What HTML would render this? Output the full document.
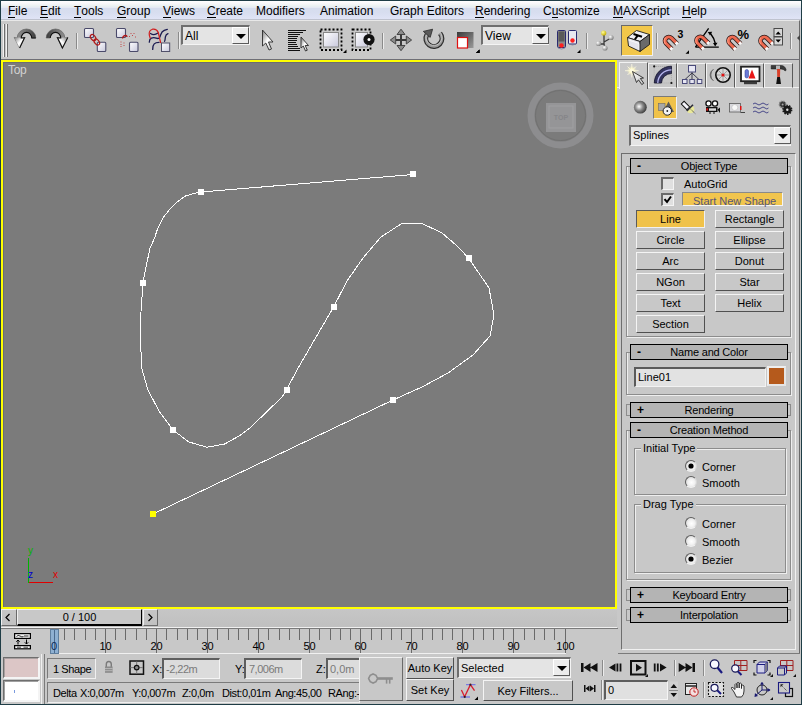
<!DOCTYPE html>
<html><head><meta charset="utf-8">
<style>
*{margin:0;padding:0;box-sizing:border-box}
html,body{width:802px;height:705px;overflow:hidden;background:#c8c8c8;font-family:"Liberation Sans",sans-serif;font-size:11px;color:#000;position:relative}
.a{position:absolute}
.t{position:absolute;white-space:nowrap;line-height:13px}
svg{position:absolute;overflow:visible}
#menu{position:absolute;left:1px;top:1px;width:800px;height:19px;background:linear-gradient(#ffffff 0px,#f6f5f8 3px,#eaf2f2 5px,#e6e9f4 6.5px,#d6ddee 7.5px,#d8def0 12px,#e0e4f6 18px);border-bottom:1px solid #bfc3cf}
#menu span{position:absolute;top:3px;font-size:12px;line-height:14px;color:#000}
#menu u{text-decoration:none;position:relative}
#menu u:after{content:"";position:absolute;left:0;right:0;top:13px;height:1px;background:#000}
.vsep{position:absolute;width:2px;border-left:1px solid #8a8a8a;border-right:1px solid #ececec}
.drop{position:absolute;background:#e4e4e4;border-top:2px solid #6e6e6e;border-left:2px solid #6e6e6e;border-bottom:1px solid #f4f4f4;border-right:1px solid #f4f4f4}
.dbtn{position:absolute;background:#ececec;border-right:1px solid #5a5a5a;border-bottom:1px solid #5a5a5a;border-top:1px solid #fff;border-left:1px solid #fff}
.dbtn:after{content:"";position:absolute;left:50%;top:50%;margin-left:-5px;margin-top:-2px;border-left:5px solid transparent;border-right:5px solid transparent;border-top:5px solid #000}
.btn{position:absolute;background:#c8c8c8;border-top:1px solid #f4f4f4;border-left:1px solid #f4f4f4;border-right:1px solid #505050;border-bottom:1px solid #505050;text-align:center;line-height:16px;height:18px}
.roll{position:absolute;left:630px;width:158px;height:16px;background:#b4b4b4;border:1px solid #000;text-align:center;line-height:14px;letter-spacing:-0.2px}
.roll b{position:absolute;left:6px;top:0px;font-weight:bold;font-size:12px}
.grp{position:absolute;border:1px solid #8c8c8c;box-shadow:1px 1px 0 #ededed, inset 1px 1px 0 #ededed}
.radio{position:absolute;width:12px;height:12px;border-radius:50%;background:radial-gradient(circle at 55% 55%,#ffffff 0,#f2f2f2 40%,#dcdcdc 75%);border:1.5px solid;border-color:#5e5e5e #d8d8d8 #f0f0f0 #5e5e5e;left:0}
.radio.on:after{content:"";position:absolute;left:2.5px;top:2.5px;width:4px;height:4px;border-radius:50%;background:#000;box-shadow:0 0 0 0.6px #000}
.fld{position:absolute;background:#dcdcdc;border-top:2px solid #5e5e5e;border-left:2px solid #5e5e5e;border-right:1px solid #f4f4f4;border-bottom:1px solid #f4f4f4}
</style></head>
<body>
<div class="a" style="left:0;top:0;width:802px;height:705px;border:1px solid #1f3d46;z-index:50;pointer-events:none"></div>
<div id="menu">
<span style="left:7px"><u>F</u>ile</span>
<span style="left:39px"><u>E</u>dit</span>
<span style="left:73px"><u>T</u>ools</span>
<span style="left:116px"><u>G</u>roup</span>
<span style="left:162px"><u>V</u>iews</span>
<span style="left:206px"><u>C</u>reate</span>
<span style="left:255px">Modifiers</span>
<span style="left:319px">Animation</span>
<span style="left:389px">Graph Editors</span>
<span style="left:474px"><u>R</u>endering</span>
<span style="left:542px">C<u>u</u>stomize</span>
<span style="left:612px"><u>M</u>AXScript</span>
<span style="left:681px"><u>H</u>elp</span>
</div>
<div class="a" style="left:1px;top:20px;width:799px;height:40px;background:#c8c8c8;border-top:1px solid #e8e8e8;border-bottom:1px solid #6f6f76;border-right:1px solid #6a6a6a"></div>
<!-- grip -->
<div class="a" style="left:3px;top:24px;width:2px;height:33px;border-left:1px solid #f2f2f2;border-right:1px solid #6e6e6e"></div>
<div class="a" style="left:6px;top:24px;width:2px;height:33px;border-left:1px solid #f2f2f2;border-right:1px solid #6e6e6e"></div>
<!-- separators -->
<div class="vsep" style="left:76px;top:33px;height:16px"></div>
<div class="vsep" style="left:178px;top:32px;height:17px"></div>
<div class="vsep" style="left:382px;top:33px;height:16px"></div>
<div class="vsep" style="left:586px;top:33px;height:16px"></div>
<div class="vsep" style="left:656px;top:33px;height:16px"></div>
<div class="vsep" style="left:790px;top:33px;height:16px"></div>
<!-- dropdowns -->
<div class="drop" style="left:181px;top:25px;width:69px;height:20px"></div>
<div class="t" style="left:185px;top:29px;font-size:12px;line-height:14px">All</div>
<div class="dbtn" style="left:232px;top:27px;width:17px;height:17px"></div>
<div class="drop" style="left:481px;top:25px;width:68px;height:20px"></div>
<div class="t" style="left:485px;top:29px;font-size:12px;line-height:14px">View</div>
<div class="dbtn" style="left:532px;top:27px;width:17px;height:17px"></div>
<!-- yellow toggle -->
<div class="a" style="left:621px;top:25px;width:32px;height:31px;background:#f2c74a;border-top:1px solid #6a6a6a;border-left:1px solid #6a6a6a;border-right:1px solid #f0f0f0;border-bottom:1px solid #f0f0f0"></div>

<svg style="left:0;top:0" width="802" height="60">
<defs>
<linearGradient id="gArc" x1="0" y1="0" x2="1" y2="0"><stop offset="0" stop-color="#9a9a9a"/><stop offset="0.6" stop-color="#6a6a6a"/><stop offset="1" stop-color="#3a3a3a"/></linearGradient>
<linearGradient id="gArcR" x1="1" y1="0" x2="0" y2="0"><stop offset="0" stop-color="#9a9a9a"/><stop offset="0.6" stop-color="#6a6a6a"/><stop offset="1" stop-color="#3a3a3a"/></linearGradient>
<linearGradient id="gHead" x1="0" y1="0" x2="1" y2="1"><stop offset="0" stop-color="#7a7a7a"/><stop offset="0.5" stop-color="#ffffff"/><stop offset="1" stop-color="#bcbcbc"/></linearGradient>
<linearGradient id="gBox" x1="0" y1="0" x2="1" y2="1"><stop offset="0" stop-color="#ffffff"/><stop offset="1" stop-color="#c8c8dc"/></linearGradient>
<linearGradient id="gMag" x1="0" y1="0" x2="1" y2="1"><stop offset="0" stop-color="#ff9a80"/><stop offset="1" stop-color="#d84a2a"/></linearGradient>
<linearGradient id="gScale" x1="0" y1="0" x2="1" y2="1"><stop offset="0" stop-color="#3a3a3a"/><stop offset="1" stop-color="#9a9a9a"/></linearGradient>
<radialGradient id="gBall" cx="0.35" cy="0.35" r="0.7"><stop offset="0" stop-color="#ffffff"/><stop offset="1" stop-color="#7a7a7a"/></radialGradient>
<radialGradient id="gBallY" cx="0.35" cy="0.35" r="0.7"><stop offset="0" stop-color="#ffffa0"/><stop offset="1" stop-color="#c8b000"/></radialGradient>
</defs>
<!-- undo -->
<g id="undo">
<path d="M35.8 38 A9.3 9 0 0 0 17.2 38 L14.2 37.4 L19.6 48 L24.6 37.6 L21.2 38 A5.3 5.6 0 0 1 31.8 38 Z" fill="url(#gArc)" stroke="#555" stroke-width="0.6"/>
<path d="M14.2 37.4 L19.6 48 L24.6 37.6 Z" fill="url(#gHead)"/>
<path d="M19.6 48 L24.6 37.6 L21.2 38 A5.3 5.6 0 0 1 31.8 38 L35.8 38" fill="none" stroke="#111" stroke-width="1.1"/>
</g>
<!-- redo -->
<g transform="translate(82 0) scale(-1 1)">
<path d="M35.8 38 A9.3 9 0 0 0 17.2 38 L14.2 37.4 L19.6 48 L24.6 37.6 L21.2 38 A5.3 5.6 0 0 1 31.8 38 Z" fill="url(#gArc)" stroke="#555" stroke-width="0.6"/>
<path d="M14.2 37.4 L19.6 48 L24.6 37.6 Z" fill="url(#gHead)"/>
<path d="M14.2 37.4 L19.6 48 L24.6 37.6 L21.2 38 A5.3 5.6 0 0 1 31.8 38" fill="none" stroke="#111" stroke-width="1.1"/>
</g>
<!-- link -->
<rect x="84.5" y="28.5" width="9" height="9" rx="1" fill="url(#gBox)" stroke="#4a4a6a" stroke-width="1.1"/>
<rect x="97.3" y="42.3" width="8.5" height="9.2" rx="1" fill="url(#gBox)" stroke="#4a4a6a" stroke-width="1.1"/>
<ellipse cx="93.1" cy="37.6" rx="2.2" ry="3.4" transform="rotate(-40 93.1 37.6)" fill="none" stroke="#b01818" stroke-width="1.2"/>
<ellipse cx="96.8" cy="42" rx="2.2" ry="3.4" transform="rotate(-40 96.8 42)" fill="none" stroke="#b01818" stroke-width="1.2"/>
<!-- unlink -->
<rect x="116.5" y="28.5" width="9" height="9" rx="1" fill="url(#gBox)" stroke="#4a4a6a" stroke-width="1.1"/>
<rect x="129.5" y="42.3" width="8.5" height="9.2" rx="1" fill="url(#gBox)" stroke="#4a4a6a" stroke-width="1.1"/>
<path d="M122.5 38.5 q0.5 -3 3 -3 q1.5 0 1.5 1.5" fill="none" stroke="#b01818" stroke-width="1.3"/>
<path d="M130.5 33.5 h1 M133.5 33.5 h1 M129 36.5 h1 M132 35.5 h1 M135 37 h1 M120.5 42 h1 M120.5 44.5 h1 M120.5 46.5 h1 M123.5 43 h1 M123.5 45.5 h1" stroke="#c04a4a" stroke-width="1"/>
<!-- bind -->
<g fill="none" stroke="#1a1a50" stroke-width="1.3" stroke-linecap="round">
<path d="M150.5 33.5 q3.5 2.5 7.5 -0.5"/>
<path d="M149.3 42.2 q0 -3 2 -4 q2.5 -1 5 0 q2.5 1 3.5 -1 q1 -3 2.5 -5.5 q1.5 -1.5 5 -2.3"/>
<path d="M152.7 49.4 q0 -4 1.5 -5.5 q1.5 -1.5 4.8 -1.5"/>
<path d="M164.6 41.3 q0.5 -1 0.8 -4.5 q0.5 -2.5 2.6 -3.2"/>
</g>
<path d="M160.7 43 L158.3 32.5 Q156.5 28.5 152.5 29.2 Q148.5 30.5 149.3 35 L150.3 38.5" fill="none" stroke="#d02020" stroke-width="1.2"/>
<rect x="161.5" y="43" width="8.2" height="8.5" fill="url(#gBox)" stroke="#50506a" stroke-width="1"/>
<!-- select arrow -->
<path d="M262.5 30 L262.5 46 L265.8 43 L269 50 L271.5 49 L268.5 42 L273 42 Z" fill="url(#gHead)" stroke="#2a2a2a" stroke-width="0.9"/>
<!-- select by name -->
<path d="M288 30.5 H306 M288 32.5 H303 M288 34.5 H300 M288 36.5 H298 M288 38.5 H297 M288 40.5 H297 M288 42.5 H296 M288 44.5 H297 M288 46.5 H298 M288 48.5 H300 M288 50.5 H300" stroke="#111" stroke-width="1"/>
<path d="M301 37 L301 48 L303.3 46 L305.5 51 L307.3 50.2 L305.2 45.5 L308.5 45.5 Z" fill="url(#gHead)" stroke="#2a2a2a" stroke-width="0.9"/>
<!-- rect select -->
<rect x="323.5" y="32.5" width="15" height="14.5" fill="url(#gBox)" stroke="#888" stroke-width="1"/>
<rect x="320.5" y="29.5" width="21" height="20.5" fill="none" stroke="#000" stroke-width="1.8" stroke-dasharray="2 2"/>
<path d="M343 53 L346.5 49.5 V53 Z" fill="#000"/>
<!-- window crossing -->
<rect x="355.5" y="32.5" width="12" height="14.5" fill="url(#gBox)" stroke="#888" stroke-width="1"/>
<rect x="352.5" y="29.5" width="18" height="20.5" fill="none" stroke="#000" stroke-width="1.8" stroke-dasharray="2 2"/>
<circle cx="369" cy="39.5" r="5.6" fill="#111"/>
<circle cx="369" cy="39.5" r="1.5" fill="#fff"/>
<!-- move -->
<path d="M395.7 40 H406.5 M401 34.5 V45.5" stroke="#3a3a3a" stroke-width="2"/>
<g fill="#8c8c8c" stroke="#3a3a3a" stroke-width="0.9" stroke-linejoin="round">
<path d="M401 29.2 L405 34.5 H397 Z"/>
<path d="M401 50.7 L405 45.5 H397 Z"/>
<path d="M390.3 40 L395.7 36 V44 Z"/>
<path d="M411.6 40 L406.3 36 V44 Z"/>
</g>
<!-- rotate -->
<path d="M440 33.3 A8 8 0 1 1 427 34.5" fill="none" stroke="#2e2e2e" stroke-width="5"/>
<path d="M440 33.3 A8 8 0 1 1 427 34.5" fill="none" stroke="#9a9a9a" stroke-width="2.6"/>
<path d="M440.5 32.8 A8 8 0 1 1 426.6 34.2" fill="none" stroke="#d0d0d0" stroke-width="0.8"/>
<path d="M423.3 31.4 L432.6 29.2 L430.2 37.4 Z" fill="#5a5a5a" stroke="#2a2a2a" stroke-width="0.8"/>
<!-- scale -->
<rect x="457" y="32" width="16.5" height="16" fill="url(#gScale)"/>
<rect x="457.5" y="37.5" width="10" height="10.5" fill="#fff" stroke="#e01010" stroke-width="1.2"/>
<path d="M476 53 L479.5 49.5 V53 Z" fill="#000"/>
<path d="M476 53 L479.5 49.5 V53 Z" transform="translate(0 0)" fill="#000"/>
<!-- flyout near View -->
<path d="M476 53 L479.5 49.5 V53 Z" fill="#000"/>
<!-- pivot -->
<rect x="557.5" y="30.5" width="8" height="17" rx="1" fill="#8a8a8a" stroke="#2a2a70" stroke-width="1"/>
<rect x="558.5" y="31.5" width="6" height="10" fill="#5a5a5a"/>
<circle cx="561.5" cy="45.5" r="2.2" fill="#ff2020"/>
<rect x="568.5" y="30.5" width="8" height="13.5" rx="1" fill="#e8e8f0" stroke="#2a2a70" stroke-width="1"/>
<circle cx="572.5" cy="40.5" r="2.2" fill="#ff2020"/>
<path d="M558 48 q3.5 2 7 0 M569 44 q3.5 2 7 0" fill="none" stroke="#7a7a9a" stroke-width="0.8"/>
<path d="M577 53 L580.5 49.5 V53 Z" fill="#000"/>
<!-- manipulate -->
<path d="M604 34 L604 44 L599 44 M604 42 L611 38 M604 44 L605 48" fill="none" stroke="#3a3a3a" stroke-width="1.3"/>
<circle cx="603.7" cy="33" r="2.6" fill="url(#gBallY)"/>
<circle cx="598.5" cy="43.5" r="2.6" fill="url(#gBall)"/>
<circle cx="611" cy="37.5" r="2.6" fill="url(#gBall)"/>
<circle cx="605" cy="48" r="2.6" fill="url(#gBall)"/>
<!-- keyboard override icon -->
<path d="M627.5 37.5 L636.5 30.5 L649.5 34.5 L640 41.5 Z" fill="#f0f0f4" stroke="#1a1a1a" stroke-width="0.9"/>
<path d="M627.5 37.5 L640 41.5 V51.5 L628.5 46 Z" fill="#e4e4ec" stroke="#1a1a1a" stroke-width="0.9"/>
<path d="M640 41.5 L649.5 34.5 V44.5 L640 51.5 Z" fill="#6a6a6a" stroke="#1a1a1a" stroke-width="0.9"/>
<path d="M628.5 40 L639 43.5 V50" fill="none" stroke="#fff" stroke-width="0.7"/>
<path d="M633.5 34 L642 36.8" stroke="#000" stroke-width="2"/>
<path d="M637.8 35.4 L634.8 39.5" stroke="#000" stroke-width="2"/>
<!-- snaps: magnets -->
<g id="mag" transform="translate(668.8 40.8) rotate(-45)">
<path d="M-3.8 8 V0 A3.8 3.8 0 0 1 3.8 0 V8" fill="none" stroke="#2a1a1a" stroke-width="4.6"/>
<path d="M-3.8 8 V0 A3.8 3.8 0 0 1 3.8 0 V8" fill="none" stroke="#ee6a50" stroke-width="3"/>
<path d="M-4.6 0 A4.6 4.6 0 0 1 0 -4.6" fill="none" stroke="#ff9a80" stroke-width="1"/>
<rect x="-5.3" y="6" width="3" height="2.6" fill="#f8f8f8"/>
<rect x="2.3" y="6" width="3" height="2.6" fill="#f8f8f8"/>
</g>
<text x="677.6" y="37.6" font-family="Liberation Sans" font-weight="bold" font-size="10.5" fill="#000">3</text>
<path d="M685.5 53.8 L689 50.3 V53.8 Z" fill="#000"/>
<path d="M695.4 47.2 H718.8 M695.4 47.2 L708.6 28.3" stroke="#000" stroke-width="1.3" fill="none"/>
<path d="M710.5 33.5 q4 5 5 10.5" stroke="#000" stroke-width="1.4" fill="none"/>
<path d="M707.8 32 L712.2 31.8 L710 35.5 Z M713 43 L717.5 42.8 L715.2 46.5 Z" fill="#000"/>
<g transform="translate(31.5 -0.3)"><use href="#mag"/></g>
<g transform="translate(63.5 0)"><use href="#mag"/></g>
<text x="737.5" y="38.8" font-family="Liberation Sans" font-weight="bold" font-size="13" fill="#000">%</text>
<g transform="translate(95.5 0)"><use href="#mag"/></g>
<rect x="774" y="28.5" width="8.5" height="8" fill="#d8d8d8" stroke="#4a4a4a" stroke-width="1"/>
<rect x="774" y="37" width="8.5" height="8" fill="#d8d8d8" stroke="#4a4a4a" stroke-width="1"/>
<path d="M775.5 34.5 L778.2 31.5 L781 34.5 Z M775.5 39.5 L778.2 42.5 L781 39.5 Z" fill="#000"/>
<path d="M797 38 L800 35 V41 Z" fill="#444"/>
</svg>
<div class="a" style="left:1px;top:60px;width:616px;height:549px;background:#ffff00"></div>
<div class="a" style="left:3px;top:62px;width:612px;height:545px;background:#7b7b7b;border-top:1px solid #6b6b73;border-left:1px solid #6b6b73"></div>
<div class="t" style="left:8px;top:63px;font-size:12px;line-height:14px;color:#d2d2d2;letter-spacing:-0.3px">Top</div>
<!-- viewcube -->
<svg style="left:0;top:0" width="802" height="705">
<circle cx="560.5" cy="115.5" r="29.5" fill="none" stroke="#8d8d8f" stroke-width="7"/>
<circle cx="560.5" cy="115.5" r="25" fill="none" stroke="#717171" stroke-width="1"/>
<rect x="546" y="103" width="30" height="29" fill="#959597"/>
<rect x="549" y="106" width="24" height="22" fill="none" stroke="#a0a0a2" stroke-width="1"/>
<text x="561" y="120" font-family="Liberation Sans" font-size="7" font-weight="bold" fill="#868689" text-anchor="middle">TOP</text>
</svg>
<!-- spline -->
<svg style="left:0;top:0" width="802" height="705">
<polyline shape-rendering="crispEdges" fill="none" stroke="#ffffff" stroke-width="1" points="153,514 393,400 422,387 448,373 473,355 490,336 494,315 489,288 468.6,258 456,245 442,233 421,223 401,224 381,237 363,258 347,281 333.6,307 297.5,369 286.5,390 282,397 251,427 240,435.5 224.6,444 207,447.2 189,442 173,430 159,411 148,390 142,369 140.5,343 140.5,319 143,283 145,272 150,248 154.4,238.5 157.5,229 163.6,217 170.5,208.4 175.8,203 185.4,196 195.8,193 201,192 413,174.5"/>
<g fill="#ffffff">
<rect x="198" y="189" width="6" height="6"/>
<rect x="410" y="171" width="6" height="6"/>
<rect x="140" y="280" width="6" height="6"/>
<rect x="331" y="304" width="6" height="6"/>
<rect x="466" y="255" width="6" height="6"/>
<rect x="390" y="397" width="6" height="6"/>
<rect x="284" y="387" width="6" height="6"/>
<rect x="170" y="427" width="6" height="6"/>
</g>
<rect x="150" y="511" width="6" height="6" fill="#ffff00"/>
<!-- axis -->
<line x1="28.5" y1="558" x2="28.5" y2="583" stroke="#00b400" stroke-width="1"/>
<line x1="29" y1="582.5" x2="53" y2="582.5" stroke="#e00000" stroke-width="1"/>
<text x="28" y="554" font-family="Liberation Sans" font-size="10" fill="#00b400">y</text>
<text x="28" y="578" font-family="Liberation Sans" font-size="10" fill="#0000d0">z</text>
<text x="53" y="578" font-family="Liberation Sans" font-size="10" fill="#e00000">x</text>
</svg>
<!-- tabs -->
<div class="a" style="left:617px;top:87px;width:182px;height:1px;background:#efefef"></div>
<div class="a" style="left:619px;top:62px;width:29px;height:27px;background:#c8c8c8;border-left:1px solid #f2f2f2;border-top:1px solid #f2f2f2;border-right:1px solid #5a5a5a"></div>
<div class="a" style="left:648px;top:63px;width:29px;height:25px;border-left:1px solid #f2f2f2;border-top:1px solid #f2f2f2;border-right:1px solid #5a5a5a;border-bottom:1px solid #efefef"></div>
<div class="a" style="left:677px;top:63px;width:29px;height:25px;border-left:1px solid #f2f2f2;border-top:1px solid #f2f2f2;border-right:1px solid #5a5a5a;border-bottom:1px solid #efefef"></div>
<div class="a" style="left:706px;top:63px;width:29px;height:25px;border-left:1px solid #f2f2f2;border-top:1px solid #f2f2f2;border-right:1px solid #5a5a5a;border-bottom:1px solid #efefef"></div>
<div class="a" style="left:735px;top:63px;width:29px;height:25px;border-left:1px solid #f2f2f2;border-top:1px solid #f2f2f2;border-right:1px solid #5a5a5a;border-bottom:1px solid #efefef"></div>
<div class="a" style="left:764px;top:63px;width:29px;height:25px;border-left:1px solid #f2f2f2;border-top:1px solid #f2f2f2;border-right:1px solid #5a5a5a;border-bottom:1px solid #efefef"></div>
<div class="a" style="left:799px;top:60px;width:1px;height:594px;background:#6a6a6a"></div>

<!-- sub-category yellow button -->
<div class="a" style="left:653px;top:96px;width:24px;height:23px;background:#f0c24a;border-top:1px solid #7a7a7a;border-left:1px solid #7a7a7a;border-right:1px solid #f2f2f2;border-bottom:1px solid #f2f2f2"></div>

<!-- splines dropdown -->
<div class="drop" style="left:629px;top:125px;width:162px;height:21px"></div>
<div class="t" style="left:633px;top:129px">Splines</div>
<div class="dbtn" style="left:774px;top:127px;width:17px;height:17px"></div>

<!-- container -->
<div class="a" style="left:621px;top:153px;width:175px;height:497px;border-top:1px solid #6e6e6e;border-left:1px solid #6e6e6e;border-right:1px solid #f0f0f0;border-bottom:1px solid #f0f0f0"></div>

<!-- Object Type -->
<div class="a" style="left:626px;top:166px;width:165px;height:171px;border:1px solid #8c8c8c;border-top:none;box-shadow:inset 1px 0 0 #eeeeee,1px 1px 0 #eeeeee"></div>
<div class="roll" style="top:158px">Object Type<b>-</b></div>
<div class="a" style="left:661px;top:177px;width:13px;height:13px;background:#e0e0e0;border-top:2px solid #6a6a6a;border-left:2px solid #6a6a6a;border-right:1px solid #f4f4f4;border-bottom:1px solid #f4f4f4"></div>
<div class="t" style="left:684px;top:178px">AutoGrid</div>
<div class="a" style="left:661px;top:193px;width:13px;height:13px;background:#e0e0e0;border-top:2px solid #6a6a6a;border-left:2px solid #6a6a6a;border-right:1px solid #f4f4f4;border-bottom:1px solid #f4f4f4"></div>
<svg style="left:661px;top:193px" width="13" height="13"><path d="M3.5 6.2 L6 9 L10 3.5" fill="none" stroke="#000" stroke-width="2"/></svg>
<div class="a" style="left:682px;top:192px;width:101px;height:14px;background:#f1c54e;border-top:1px solid #8a8a8a;border-left:1px solid #8a8a8a;border-right:1px solid #f4f4f4;border-bottom:1px solid #f4f4f4"></div>
<div class="t" style="left:693px;top:195px;color:#55557a">Start New Shape</div>

<div class="a" style="left:636px;top:210px;width:69px;height:18px;background:#f0c24a;border-top:1px solid #5a5a5a;border-left:1px solid #5a5a5a;border-right:1px solid #f0f0f0;border-bottom:1px solid #f0f0f0;text-align:center;line-height:16px;padding-top:0px">Line</div>
<div class="btn" style="left:715px;top:210px;width:69px;height:18px">Rectangle</div>
<div class="btn" style="left:636px;top:231px;width:69px;height:18px">Circle</div>
<div class="btn" style="left:715px;top:231px;width:69px;height:18px">Ellipse</div>
<div class="btn" style="left:636px;top:252px;width:69px;height:18px">Arc</div>
<div class="btn" style="left:715px;top:252px;width:69px;height:18px">Donut</div>
<div class="btn" style="left:636px;top:273px;width:69px;height:18px">NGon</div>
<div class="btn" style="left:715px;top:273px;width:69px;height:18px">Star</div>
<div class="btn" style="left:636px;top:294px;width:69px;height:18px">Text</div>
<div class="btn" style="left:715px;top:294px;width:69px;height:18px">Helix</div>
<div class="btn" style="left:636px;top:315px;width:69px;height:18px">Section</div>

<!-- Name and Color -->
<div class="a" style="left:626px;top:352px;width:165px;height:43px;border:1px solid #8c8c8c;border-top:none;box-shadow:inset 1px 0 0 #eeeeee,1px 1px 0 #eeeeee"></div>
<div class="roll" style="top:344px">Name and Color<b>-</b></div>
<div class="a" style="left:634px;top:367px;width:132px;height:20px;background:#e2e2e2;border-top:2px solid #5a5a5a;border-left:2px solid #5a5a5a;border-right:1px solid #f2f2f2;border-bottom:1px solid #f2f2f2"></div>
<div class="t" style="left:638px;top:371px">Line01</div>
<div class="a" style="left:767px;top:366px;width:19px;height:20px;background:#b55a1c;border:2px solid #e4e4e4;border-top-color:#eeeeee;border-left-color:#eeeeee"></div>

<!-- Rendering -->
<div class="a" style="left:626px;top:404px;width:4px;height:12px;border:1px solid #8c8c8c;border-right:none"></div>
<div class="a" style="left:787px;top:404px;width:4px;height:12px;border:1px solid #8c8c8c;border-left:none"></div>
<div class="roll" style="top:402px">Rendering<b>+</b></div>

<!-- Creation Method -->
<div class="a" style="left:626px;top:430px;width:165px;height:150px;border:1px solid #8c8c8c;border-top:none;box-shadow:inset 1px 0 0 #eeeeee,1px 1px 0 #eeeeee"></div>
<div class="roll" style="top:422px">Creation Method<b>-</b></div>
<div class="a" style="left:634px;top:448px;width:152px;height:47px;border:1px solid #8c8c8c;box-shadow:inset 1px 1px 0 #eeeeee,1px 1px 0 #eeeeee"></div>
<div class="t" style="left:641px;top:442px;background:#c8c8c8;padding:0 2px">Initial Type</div>
<div class="radio on" style="left:685px;top:460px"></div>
<div class="t" style="left:702px;top:461px">Corner</div>
<div class="radio" style="left:685px;top:476px"></div>
<div class="t" style="left:702px;top:477px">Smooth</div>
<div class="a" style="left:634px;top:504px;width:152px;height:69px;border:1px solid #8c8c8c;box-shadow:inset 1px 1px 0 #eeeeee,1px 1px 0 #eeeeee"></div>
<div class="t" style="left:641px;top:498px;background:#c8c8c8;padding:0 2px">Drag Type</div>
<div class="radio" style="left:685px;top:517px"></div>
<div class="t" style="left:702px;top:518px">Corner</div>
<div class="radio" style="left:685px;top:535px"></div>
<div class="t" style="left:702px;top:536px">Smooth</div>
<div class="radio on" style="left:685px;top:553px"></div>
<div class="t" style="left:702px;top:554px">Bezier</div>

<div class="a" style="left:626px;top:166px;width:4px;height:1px;background:#8c8c8c"></div><div class="a" style="left:788px;top:166px;width:3px;height:1px;background:#8c8c8c"></div>
<div class="a" style="left:626px;top:352px;width:4px;height:1px;background:#8c8c8c"></div><div class="a" style="left:788px;top:352px;width:3px;height:1px;background:#8c8c8c"></div>
<div class="a" style="left:626px;top:430px;width:4px;height:1px;background:#8c8c8c"></div><div class="a" style="left:788px;top:430px;width:3px;height:1px;background:#8c8c8c"></div>
<!-- Keyboard Entry / Interpolation -->
<div class="a" style="left:626px;top:589px;width:4px;height:12px;border:1px solid #8c8c8c;border-right:none"></div>
<div class="a" style="left:787px;top:589px;width:4px;height:12px;border:1px solid #8c8c8c;border-left:none"></div>
<div class="roll" style="top:587px">Keyboard Entry<b>+</b></div>
<div class="a" style="left:626px;top:609px;width:4px;height:12px;border:1px solid #8c8c8c;border-right:none"></div>
<div class="a" style="left:787px;top:609px;width:4px;height:12px;border:1px solid #8c8c8c;border-left:none"></div>
<div class="roll" style="top:607px">Interpolation<b>+</b></div>
<svg style="left:0;top:0" width="802" height="130">
<defs>
<radialGradient id="gGlow" cx="0.5" cy="0.5" r="0.5"><stop offset="0" stop-color="#ffffff"/><stop offset="0.35" stop-color="#fff8c0"/><stop offset="1" stop-color="#c8c8c8" stop-opacity="0"/></radialGradient>
<radialGradient id="gSph" cx="0.4" cy="0.45" r="0.6"><stop offset="0" stop-color="#ffffff"/><stop offset="0.5" stop-color="#8a8a8a"/><stop offset="1" stop-color="#3a3a3a"/></radialGradient>
<linearGradient id="gTube" x1="0" y1="1" x2="1" y2="0"><stop offset="0" stop-color="#2a2a50"/><stop offset="0.5" stop-color="#8a8ac0"/><stop offset="1" stop-color="#2a2a50"/></linearGradient>
<linearGradient id="gArw" x1="0" y1="0" x2="1" y2="1"><stop offset="0" stop-color="#ffffff"/><stop offset="1" stop-color="#c0c0c0"/></linearGradient>
</defs>
<!-- tab1 create -->
<circle cx="631.8" cy="70.7" r="6" fill="url(#gGlow)"/>
<path d="M631.8 64 V77.4 M625 70.7 H638.6 M627.5 66.5 L636 75 M636 66.5 L627.5 75" stroke="#fffbe0" stroke-width="0.8"/>
<path d="M632.5 71.5 L636.5 82.5 L638.5 79.8 L641.8 84.6 L643.8 83.2 L640.3 78.5 L643.5 78 Z" fill="url(#gArw)" stroke="#2a2a2a" stroke-width="0.9"/>
<!-- tab2 modify -->
<path d="M654.2 66.4 H671.4 V83" fill="none" stroke="#8a8a8a" stroke-width="0.6" stroke-dasharray="1 1"/>
<path d="M654.2 66.4 V83 H671.4" fill="none" stroke="#a0a0a0" stroke-width="0.6" stroke-dasharray="1 1"/>
<path d="M654.3 83 A17.2 16.8 0 0 1 671.5 66.2 V73.5 A10 9.5 0 0 0 661.5 83 Z" fill="#34345e" stroke="#14142a" stroke-width="0.8"/>
<path d="M657.8 83 A13.7 13.2 0 0 1 671.5 69.8" fill="none" stroke="#b8b8f0" stroke-width="1.3"/>
<circle cx="654.2" cy="66.4" r="1.1" fill="#111"/>
<circle cx="671.4" cy="83" r="1.1" fill="#111"/>
<!-- tab3 hierarchy -->
<path d="M692 72 V80 M692 73 L684.5 80 M692 73 L699.5 80" stroke="#3a3a4a" stroke-width="1"/>
<rect x="688.5" y="65.5" width="7" height="6.5" fill="#e8e8f4" stroke="#4a4a7a" stroke-width="1"/>
<rect x="682.5" y="79.5" width="4.5" height="4" fill="#e8e8f4" stroke="#4a4a7a" stroke-width="1"/>
<rect x="689.8" y="79.5" width="4.5" height="4" fill="#e8e8f4" stroke="#4a4a7a" stroke-width="1"/>
<rect x="697.3" y="79.5" width="4.5" height="4" fill="#e8e8f4" stroke="#4a4a7a" stroke-width="1"/>
<!-- tab4 motion -->
<path d="M713.5 69 A8 8 0 0 0 713.5 81 M711.8 70.5 A7 7 0 0 0 711.8 79.5" fill="none" stroke="#555" stroke-width="0.8"/>
<circle cx="723" cy="75" r="7.2" fill="#d8d8d8" stroke="#111" stroke-width="1.6"/>
<path d="M723 69 V81 M717 75 H729 M718.8 70.8 L727.2 79.2 M727.2 70.8 L718.8 79.2" stroke="#8a8a8a" stroke-width="0.7"/>
<circle cx="723" cy="75" r="1.6" fill="#e01010"/>
<!-- tab5 display -->
<rect x="741" y="66.7" width="18.5" height="14.5" fill="#fff" stroke="#222" stroke-width="1.8"/>
<rect x="744" y="81.8" width="13" height="2.4" fill="#3a3a3a"/>
<rect x="745" y="69.5" width="3.5" height="8.5" rx="1.7" fill="#6a7ad8" stroke="#2a3a8a" stroke-width="0.5"/>
<path d="M748.5 78.5 L752 69.5 L755.5 78.5 Z" fill="#e81818"/>
<!-- tab6 utilities -->
<path d="M771.2 65.5 H781 Q785 65.5 786.2 70 L785.3 71 Q783.5 69 781 69 H771.2 Z" fill="#3a3a3a" stroke="#111" stroke-width="0.5"/>
<rect x="776" y="65.6" width="4" height="3.4" fill="#b8b8b8"/>
<path d="M777 69 H780.2 L780 77 H777.2 Z" fill="#d8402a"/>
<path d="M777.2 77 H780 L781 84 H776.2 Z" fill="#111"/>
<!-- subcats -->
<circle cx="640.3" cy="107.2" r="6.4" fill="url(#gSph)"/>
<rect x="658.5" y="103.5" width="6.5" height="7" fill="#a8a8a8" stroke="#6a6a6a" stroke-width="0.6"/>
<path d="M663 112 L668.5 101.5 L674 112 Z" fill="#5a5a5a"/>
<circle cx="667.3" cy="111" r="4.2" fill="#f4f4f4" stroke="#222" stroke-width="1"/>
<circle cx="667.3" cy="111" r="0.9" fill="#222"/>
<circle cx="690.5" cy="109.5" r="3.8" fill="#f0ee90" opacity="0.85"/>
<g transform="rotate(45 685.5 105.5)"><rect x="681.5" y="103.5" width="8" height="4" fill="#f4f4fa" stroke="#111" stroke-width="1"/></g>
<path d="M686.8 111 L693 104.8" stroke="#2a2a3a" stroke-width="1.6"/>
<path d="M689.3 108 L695.5 113.8" stroke="#333" stroke-width="0.9" stroke-dasharray="1 0.8"/>
<!-- camera -->
<circle cx="708.5" cy="103.5" r="2.6" fill="#fff" stroke="#111" stroke-width="1.3"/>
<circle cx="715" cy="103.5" r="2.6" fill="#fff" stroke="#111" stroke-width="1.3"/>
<rect x="706" y="107" width="11.5" height="5" fill="#111"/>
<rect x="709" y="108.3" width="7" height="2.5" fill="#d8d8d8"/>
<rect x="706.3" y="108.3" width="1.8" height="2.3" fill="#e01010"/>
<path d="M717.5 109.5 L720 107.5 V113 Z" fill="#111"/>
<path d="M710 112 V114 M714 112 V114" stroke="#111" stroke-width="1"/>
<!-- helper -->
<rect x="729.5" y="103.5" width="11" height="8.5" fill="#d8d8dc" stroke="#5a5a5a" stroke-width="0.8"/>
<circle cx="734.8" cy="107.5" r="3" fill="#f8f8f8" stroke="#b0b0b0" stroke-width="0.5"/>
<rect x="740" y="106" width="1.5" height="4" fill="#e01010"/>
<path d="M740.5 112.5 H745" stroke="#222" stroke-width="0.8"/>
<!-- spacewarp -->
<path d="M753 104 q2 -2 4 0 t4 0 t4 0 t3.5 0 M753 108 q2 -2 4 0 t4 0 t4 0 t3.5 0 M753 112 q2 -2 4 0 t4 0 t4 0 t3.5 0" fill="none" stroke="#4a4a8a" stroke-width="1"/>
<!-- systems -->
<circle cx="782.6" cy="104.4" r="3.2" fill="#333" stroke="#888" stroke-width="1.6" stroke-dasharray="1.2 1"/>
<circle cx="782.6" cy="104.4" r="1" fill="#aaa"/>
<circle cx="787.3" cy="109.8" r="4" fill="#1a1a1a" stroke="#1a1a1a" stroke-width="2.2" stroke-dasharray="1.4 1.1"/>
<circle cx="787.3" cy="109.8" r="1.2" fill="#ddd"/>
</svg>
<div class="a" style="left:64px;top:629px;width:1px;height:11px;background:#6a6a6a"></div>
<div class="a" style="left:74px;top:629px;width:1px;height:11px;background:#6a6a6a"></div>
<div class="a" style="left:85px;top:629px;width:1px;height:11px;background:#6a6a6a"></div>
<div class="a" style="left:95px;top:629px;width:1px;height:11px;background:#6a6a6a"></div>
<div class="a" style="left:105px;top:629px;width:1px;height:24px;background:#6a6a6a"></div>
<div class="t" style="left:65px;top:640px;width:81px;text-align:center;line-height:13px">10</div>
<div class="a" style="left:115px;top:629px;width:1px;height:11px;background:#6a6a6a"></div>
<div class="a" style="left:125px;top:629px;width:1px;height:11px;background:#6a6a6a"></div>
<div class="a" style="left:136px;top:629px;width:1px;height:11px;background:#6a6a6a"></div>
<div class="a" style="left:146px;top:629px;width:1px;height:11px;background:#6a6a6a"></div>
<div class="a" style="left:156px;top:629px;width:1px;height:24px;background:#6a6a6a"></div>
<div class="t" style="left:116px;top:640px;width:81px;text-align:center;line-height:13px">20</div>
<div class="a" style="left:166px;top:629px;width:1px;height:11px;background:#6a6a6a"></div>
<div class="a" style="left:177px;top:629px;width:1px;height:11px;background:#6a6a6a"></div>
<div class="a" style="left:187px;top:629px;width:1px;height:11px;background:#6a6a6a"></div>
<div class="a" style="left:197px;top:629px;width:1px;height:11px;background:#6a6a6a"></div>
<div class="a" style="left:207px;top:629px;width:1px;height:24px;background:#6a6a6a"></div>
<div class="t" style="left:167px;top:640px;width:81px;text-align:center;line-height:13px">30</div>
<div class="a" style="left:217px;top:629px;width:1px;height:11px;background:#6a6a6a"></div>
<div class="a" style="left:228px;top:629px;width:1px;height:11px;background:#6a6a6a"></div>
<div class="a" style="left:238px;top:629px;width:1px;height:11px;background:#6a6a6a"></div>
<div class="a" style="left:248px;top:629px;width:1px;height:11px;background:#6a6a6a"></div>
<div class="a" style="left:258px;top:629px;width:1px;height:24px;background:#6a6a6a"></div>
<div class="t" style="left:218px;top:640px;width:81px;text-align:center;line-height:13px">40</div>
<div class="a" style="left:268px;top:629px;width:1px;height:11px;background:#6a6a6a"></div>
<div class="a" style="left:279px;top:629px;width:1px;height:11px;background:#6a6a6a"></div>
<div class="a" style="left:289px;top:629px;width:1px;height:11px;background:#6a6a6a"></div>
<div class="a" style="left:299px;top:629px;width:1px;height:11px;background:#6a6a6a"></div>
<div class="a" style="left:309px;top:629px;width:1px;height:24px;background:#6a6a6a"></div>
<div class="t" style="left:269px;top:640px;width:81px;text-align:center;line-height:13px">50</div>
<div class="a" style="left:319px;top:629px;width:1px;height:11px;background:#6a6a6a"></div>
<div class="a" style="left:330px;top:629px;width:1px;height:11px;background:#6a6a6a"></div>
<div class="a" style="left:340px;top:629px;width:1px;height:11px;background:#6a6a6a"></div>
<div class="a" style="left:350px;top:629px;width:1px;height:11px;background:#6a6a6a"></div>
<div class="a" style="left:360px;top:629px;width:1px;height:24px;background:#6a6a6a"></div>
<div class="t" style="left:320px;top:640px;width:81px;text-align:center;line-height:13px">60</div>
<div class="a" style="left:371px;top:629px;width:1px;height:11px;background:#6a6a6a"></div>
<div class="a" style="left:381px;top:629px;width:1px;height:11px;background:#6a6a6a"></div>
<div class="a" style="left:391px;top:629px;width:1px;height:11px;background:#6a6a6a"></div>
<div class="a" style="left:401px;top:629px;width:1px;height:11px;background:#6a6a6a"></div>
<div class="a" style="left:411px;top:629px;width:1px;height:24px;background:#6a6a6a"></div>
<div class="t" style="left:371px;top:640px;width:81px;text-align:center;line-height:13px">70</div>
<div class="a" style="left:422px;top:629px;width:1px;height:11px;background:#6a6a6a"></div>
<div class="a" style="left:432px;top:629px;width:1px;height:11px;background:#6a6a6a"></div>
<div class="a" style="left:442px;top:629px;width:1px;height:11px;background:#6a6a6a"></div>
<div class="a" style="left:452px;top:629px;width:1px;height:11px;background:#6a6a6a"></div>
<div class="a" style="left:462px;top:629px;width:1px;height:24px;background:#6a6a6a"></div>
<div class="t" style="left:422px;top:640px;width:81px;text-align:center;line-height:13px">80</div>
<div class="a" style="left:473px;top:629px;width:1px;height:11px;background:#6a6a6a"></div>
<div class="a" style="left:483px;top:629px;width:1px;height:11px;background:#6a6a6a"></div>
<div class="a" style="left:493px;top:629px;width:1px;height:11px;background:#6a6a6a"></div>
<div class="a" style="left:503px;top:629px;width:1px;height:11px;background:#6a6a6a"></div>
<div class="a" style="left:513px;top:629px;width:1px;height:24px;background:#6a6a6a"></div>
<div class="t" style="left:473px;top:640px;width:81px;text-align:center;line-height:13px">90</div>
<div class="a" style="left:524px;top:629px;width:1px;height:11px;background:#6a6a6a"></div>
<div class="a" style="left:534px;top:629px;width:1px;height:11px;background:#6a6a6a"></div>
<div class="a" style="left:544px;top:629px;width:1px;height:11px;background:#6a6a6a"></div>
<div class="a" style="left:554px;top:629px;width:1px;height:11px;background:#6a6a6a"></div>
<div class="a" style="left:565px;top:629px;width:1px;height:24px;background:#6a6a6a"></div>
<div class="t" style="left:525px;top:640px;width:81px;text-align:center;line-height:13px">100</div>
<!-- time slider -->
<div class="a" style="left:1px;top:609px;width:616px;height:19px;background:linear-gradient(#c6c6c6,#c0c0c0);border-bottom:1px solid #f0f0f0"></div>
<div class="a" style="left:1px;top:609px;width:16px;height:17px;border-top:1px solid #f0f0f0;border-left:1px solid #f0f0f0;border-right:1px solid #6a6a6a;border-bottom:1px solid #6a6a6a"></div>
<svg style="left:1px;top:609px" width="16" height="17"><path d="M8.5 5 L5 8.5 L8.5 12" fill="none" stroke="#000" stroke-width="1.2"/></svg>
<div class="a" style="left:17px;top:609px;width:125px;height:17px;background:#c8c8c8;border-top:1px solid #f0f0f0;border-left:1px solid #f0f0f0;border-right:1.5px solid #000;border-bottom:2px solid #000;text-align:center;line-height:14px">0 / 100</div>
<div class="a" style="left:143px;top:609px;width:15px;height:17px;border-top:1px solid #f0f0f0;border-left:1px solid #f0f0f0;border-right:1px solid #6a6a6a;border-bottom:1px solid #6a6a6a"></div>
<svg style="left:143px;top:609px" width="15" height="17"><path d="M5.5 5 L9 8.5 L5.5 12" fill="none" stroke="#000" stroke-width="1.2"/></svg>

<!-- track bar -->
<div class="a" style="left:1px;top:628px;width:617px;height:1px;background:#7a7a7a"></div>
<div class="a" style="left:59px;top:653px;width:507px;height:1px;background:#f0f0f0"></div>
<div class="a" style="left:50px;top:629px;width:9px;height:25px;background:#8eb0d2;border:1px solid #5e7e9e"></div>
<div class="a" style="left:54px;top:630px;width:1px;height:23px;background:#4a6a8e"></div>
<div class="t" style="left:51px;top:640px;color:#0a2a5a;font-size:11px">0</div>
<svg style="left:14px;top:633px" width="18" height="17">
<rect x="0.6" y="0.6" width="15.8" height="4.8" fill="#f4f4f4" stroke="#000" stroke-width="1.2"/>
<path d="M2.5 3.5 q1.5 -2 3.5 -0.5 t3.5 0.5 M10 3 H14.5" fill="none" stroke="#000" stroke-width="0.8"/>
<rect x="0.6" y="12.6" width="15.8" height="3.2" fill="#f4f4f4" stroke="#000" stroke-width="1.2"/>
<path d="M3 14.2 H7 M9.5 14.2 H14" stroke="#000" stroke-width="0.7"/>
<path d="M4 11.5 V7 M2.3 8.7 L4 7 L5.7 8.7 M12.5 6.5 V11 M10.8 9.3 L12.5 11 L14.2 9.3" fill="none" stroke="#000" stroke-width="1"/>
</svg>

<!-- status bar -->
<div class="a" style="left:3px;top:657px;width:37px;height:22px;background:#dcc6c6;border-top:1px solid #6e6e6e;border-left:1px solid #6e6e6e;border-right:2px solid #f4f4f4;border-bottom:2px solid #f4f4f4;box-shadow:inset 1px 1px 0 #a8a0a0"></div>
<div class="a" style="left:3px;top:680px;width:37px;height:22px;background:#ffffff;border-top:1px solid #6e6e6e;border-left:1px solid #6e6e6e;border-right:2px solid #f4f4f4;border-bottom:2px solid #f4f4f4;box-shadow:inset 1px 1px 0 #a0a0a0"></div>
<div class="a" style="left:14px;top:690px;width:1px;height:3px;background:#7a9ade"></div>
<div class="a" style="left:41px;top:654px;width:4px;height:50px;border-left:1px solid #f0f0f0;border-right:1px solid #7a7a7a"></div>

<div class="a" style="left:47px;top:658px;width:49px;height:21px;background:#c8c8c8;border-top:1px solid #7a7a7a;border-left:1px solid #7a7a7a;border-right:1px solid #f0f0f0;border-bottom:1px solid #f0f0f0"></div>
<div class="t" style="left:53px;top:663px;letter-spacing:-0.4px">1 Shape</div>
<svg style="left:0;top:0" width="802" height="705">
<path d="M106.3 667 V664.3 Q106.3 661.5 108.8 661.5 Q111.3 661.5 111.3 664.3 V667" fill="none" stroke="#7a7a7a" stroke-width="1.4"/>
<rect x="105" y="666.5" width="7.6" height="6.3" fill="#8a8a8a"/>
<path d="M105 668.6 H112.6 M105 670.7 H112.6" stroke="#c4c4c4" stroke-width="0.8"/>
<rect x="130" y="661" width="13.5" height="13.2" fill="#c8c8c8" stroke="#111" stroke-width="1.5"/>
<path d="M136.7 661.5 V673.8 M130.5 667.6 H143" stroke="#7a7a7a" stroke-width="1"/>
<circle cx="136.7" cy="667.6" r="2.3" fill="#8a8a8a" stroke="#111" stroke-width="1.2"/>
</svg>
<div class="t" style="left:152px;top:663px">X:</div>
<div class="fld" style="left:162px;top:658px;width:58px;height:21px"></div>
<div class="t" style="left:166px;top:663px;color:#7a7a7a;letter-spacing:-0.5px">-2,22m</div>
<div class="t" style="left:235px;top:663px">Y:</div>
<div class="fld" style="left:244px;top:658px;width:58px;height:21px"></div>
<div class="t" style="left:249px;top:663px;color:#7a7a7a;letter-spacing:-0.5px">7,006m</div>
<div class="t" style="left:316px;top:663px">Z:</div>
<div class="fld" style="left:326px;top:658px;width:34px;height:21px;overflow:hidden"></div>
<div class="t" style="left:330px;top:663px;color:#7a7a7a">0,0m</div>

<div class="a" style="left:47px;top:682px;width:313px;height:21px;background:#c8c8c8;border-top:1px solid #7a7a7a;border-left:1px solid #7a7a7a;border-right:1px solid #f0f0f0;border-bottom:1px solid #f0f0f0"></div>
<div class="t" style="left:53px;top:687px;letter-spacing:-0.4px">Delta</div>
<div class="t" style="left:80px;top:687px;letter-spacing:-0.4px">X:0,007m</div>
<div class="t" style="left:132px;top:687px;letter-spacing:-0.4px">Y:0,007m</div>
<div class="t" style="left:182px;top:687px;letter-spacing:-0.4px">Z:0,0m</div>
<div class="t" style="left:222px;top:687px;letter-spacing:-0.4px">Dist:0,01m</div>
<div class="t" style="left:275px;top:687px;letter-spacing:-0.4px">Ang:45,00</div>
<div class="t" style="left:328px;top:687px;width:32px;overflow:hidden;letter-spacing:-0.4px">RAng:-</div>

<div class="a" style="left:359px;top:657px;width:44px;height:44px;background:#c8c8c8;border-top:1px solid #f0f0f0;border-left:1px solid #f0f0f0;border-right:1px solid #6a6a6a;border-bottom:1px solid #6a6a6a"></div>
<svg style="left:0;top:0" width="802" height="705">
<path d="M373.1 674 L376 675.3 L377.6 678.5 L376 681.7 L373.1 683 L370.2 681.7 L368.6 678.5 L370.2 675.3 Z" fill="none" stroke="#8e8e8e" stroke-width="1.6"/>
<rect x="377" y="677.2" width="15.8" height="2.6" fill="#8e8e8e"/>
<rect x="385.8" y="679" width="1.6" height="4.6" fill="#8e8e8e"/>
<rect x="388.9" y="679" width="1.6" height="4.6" fill="#8e8e8e"/>
</svg>
<div class="btn" style="left:406px;top:657px;width:48px;height:22px;line-height:20px">Auto Key</div>
<div class="btn" style="left:406px;top:679px;width:48px;height:22px;line-height:20px">Set Key</div>
<div class="drop" style="left:457px;top:657px;width:114px;height:21px"></div>
<div class="t" style="left:461px;top:662px">Selected</div>
<div class="dbtn" style="left:553px;top:659px;width:17px;height:17px"></div>
<svg style="left:0;top:0" width="802" height="705">
<path d="M460.5 697 H470 M466 684.6 H475.5" stroke="#7a7ae0" stroke-width="1.3"/>
<path d="M461.4 690 L464.6 696.7 L470.4 684.6 L474.5 690.7" fill="none" stroke="#d81e30" stroke-width="1.3"/>
<rect x="463.8" y="696" width="1.8" height="1.8" fill="#222"/>
<rect x="469.5" y="683.8" width="1.8" height="1.8" fill="#222"/>
<path d="M474.5 700 L478 696.5 V700 Z" fill="#000"/>
</svg>
<div class="btn" style="left:483px;top:680px;width:90px;height:21px;line-height:20px">Key Filters...</div>
<!-- cmd panel bottom line -->
<div class="a" style="left:618px;top:653px;width:182px;height:1px;background:#7a7a7a"></div>
<div class="vsep" style="left:602px;top:660px;height:16px"></div>
<div class="vsep" style="left:674px;top:660px;height:16px"></div>
<div class="vsep" style="left:703px;top:660px;height:16px"></div>
<div class="vsep" style="left:601px;top:680px;height:20px"></div>
<div class="vsep" style="left:703px;top:682px;height:16px"></div>
<div class="fld" style="left:604px;top:680px;width:64px;height:20px;background:#e0e0e0"></div>
<div class="t" style="left:608px;top:684px">0</div>
<svg style="left:0;top:640px" width="802" height="65">
<g transform="translate(0 -640)">
<!-- go start -->
<rect x="581" y="663" width="2.5" height="9" fill="#111"/>
<path d="M583.5 667.5 L590.5 663 V672 Z M590 667.5 L597.5 663 V672 Z" fill="#111"/>
<!-- prev -->
<path d="M609 667.5 L615.5 663.5 V671.5 Z" fill="#111"/>
<rect x="616.5" y="663.5" width="1.8" height="8" fill="#111"/>
<rect x="619.6" y="663.5" width="1.8" height="8" fill="#111"/>
<!-- play -->
<rect x="631" y="661" width="14.5" height="13.5" fill="none" stroke="#111" stroke-width="2"/>
<path d="M636 663.8 L642 667.7 L636 671.6 Z" fill="#111"/>
<path d="M645 677 L648 674 V677 Z" fill="#111"/>
<!-- next -->
<rect x="653.8" y="663.5" width="1.8" height="8" fill="#111"/>
<rect x="656.9" y="663.5" width="1.8" height="8" fill="#111"/>
<path d="M666.6 667.5 L660 663.5 V671.5 Z" fill="#111"/>
<!-- go end -->
<path d="M678.7 663 L686 667.5 L678.7 672 Z M685.5 663 L692.5 667.5 L685.5 672 Z" fill="#111"/>
<rect x="692.5" y="663" width="2.5" height="9" fill="#111"/>
<!-- key mode -->
<rect x="584" y="685" width="1.5" height="7" fill="#111"/>
<path d="M585.5 688.5 L589.5 685.5 V691.5 Z M594 688.5 L590 685.5 V691.5 Z" fill="#111"/>
<rect x="594" y="685" width="1.5" height="7" fill="#111"/>
<!-- spinner -->
<rect x="669.5" y="681.5" width="8.5" height="18.5" fill="#d0d0d0" stroke="#e8e8e8" stroke-width="0"/>
<path d="M669 690.5 H678" stroke="#888" stroke-width="1"/>
<path d="M670.5 688 L673.8 684 L677 688 Z M670.5 693 L673.8 697 L677 693 Z" fill="#111"/>
<!-- time config -->
<rect x="685.5" y="683.5" width="11" height="11" fill="#e8e8e8" stroke="#222" stroke-width="1"/>
<path d="M685.5 686 H696.5" stroke="#222" stroke-width="1.5"/>
<circle cx="694" cy="692" r="4.2" fill="#f4e0e0" stroke="#c02020" stroke-width="1"/>
<path d="M694 689.5 V692 H696" fill="none" stroke="#c02020" stroke-width="0.9"/>
<!-- zoom -->
<path d="M717.5 667.5 L722 673" stroke="#1a1a80" stroke-width="2.2"/>
<circle cx="714.6" cy="664.2" r="4.3" fill="#f8f8ff" stroke="#1a1a5a" stroke-width="1.3"/>
<!-- zoom all -->
<path d="M734.5 660.5 H747 V670.5 H734.5 Z M740.8 660.5 V670.5 M734.5 665.5 H747" fill="none" stroke="#a02020" stroke-width="1"/>
<path d="M737.5 671 L741.5 675" stroke="#1a1a80" stroke-width="2"/>
<circle cx="735.3" cy="668.5" r="3.6" fill="#f8f8ff" stroke="#1a1a5a" stroke-width="1.2"/>
<!-- zoom extents -->
<path d="M754 663 V660.5 H756.5 M767.5 660.5 H770 V663 M770 672.5 V675 H767.5 M756.5 675 H754 V672.5" fill="none" stroke="#111" stroke-width="1.2"/>
<path d="M757 664.5 L759.5 662 H767.5 V670.5 L765 673 H757 Z" fill="#d0d0e8" stroke="#1a1a80" stroke-width="1"/>
<path d="M757 664.5 H765 V673 M765 664.5 L767.5 662" fill="none" stroke="#1a1a80" stroke-width="1"/>
<path d="M765 664.5 L767.5 662 V670.5 L765 673 Z" fill="#7a7a8a"/>
<path d="M770 677 L773 674 V677 Z" fill="#111"/>
<!-- zoom ext all -->
<path d="M780.5 660.5 H793 V670.5 H780.5 Z M786.8 660.5 V670.5 M780.5 665.5 H793" fill="none" stroke="#a02020" stroke-width="1"/>
<path d="M777.5 668 L779.5 666 H786.5 V673 L784.5 675 H777.5 Z" fill="#c8c8c8" stroke="#1a1a80" stroke-width="1"/>
<path d="M777.5 668 H784.5 V675 M784.5 668 L786.5 666" fill="none" stroke="#1a1a80" stroke-width="1"/>
<path d="M793 677 L796 674 V677 Z" fill="#111"/>
<!-- zoom region -->
<rect x="708.5" y="682.5" width="15" height="14" fill="#e0e0e0" stroke="#111" stroke-width="1.1" stroke-dasharray="2 1.5"/>
<path d="M717 690 L721 694" stroke="#1a1a80" stroke-width="2"/>
<circle cx="714.5" cy="687.8" r="3.5" fill="#f8f8ff" stroke="#1a1a5a" stroke-width="1.2"/>
<!-- pan hand -->
<path d="M734 692 L731.5 688.5 Q731 687 732.8 687.5 L735 689.5 V684.5 Q735.5 683 737 684.5 V688 V683 Q738 681.8 739.2 683 V688 V683.5 Q740.5 682.5 741.5 683.8 V688.5 V685.5 Q742.8 684.5 744 686 V691 Q744 695 741.5 697 H736.5 Z" fill="#f4f4f4" stroke="#222" stroke-width="0.9"/>
<!-- orbit -->
<circle cx="762" cy="690" r="5" fill="none" stroke="#222" stroke-width="1"/>
<path d="M762 690 V682.5 M762 690 H770 M762 690 L755 696" stroke="#1a1a70" stroke-width="1"/>
<path d="M760 684.5 L762 682 L764 684.5 Z M767.5 688 L770.5 690 L767.5 692 Z M755 693 L754.5 697 L758 696 Z" fill="#1a1a70"/>
<path d="M770 700 L773 697 V700 Z" fill="#111"/>
<!-- maximize -->
<rect x="785.5" y="688.5" width="7" height="8" fill="none" stroke="#111" stroke-width="1.2"/>
<rect x="778.5" y="682.5" width="11" height="10.5" fill="#c8c8c8" stroke="#1a1a80" stroke-width="1.1"/>
<path d="M781 685 L787 691" stroke="#222" stroke-width="0.9" stroke-dasharray="1 1"/>
<path d="M780.5 684.2 H783.5 L780.5 687.2 Z" fill="#222"/>
</g>
</svg>
</body></html>
